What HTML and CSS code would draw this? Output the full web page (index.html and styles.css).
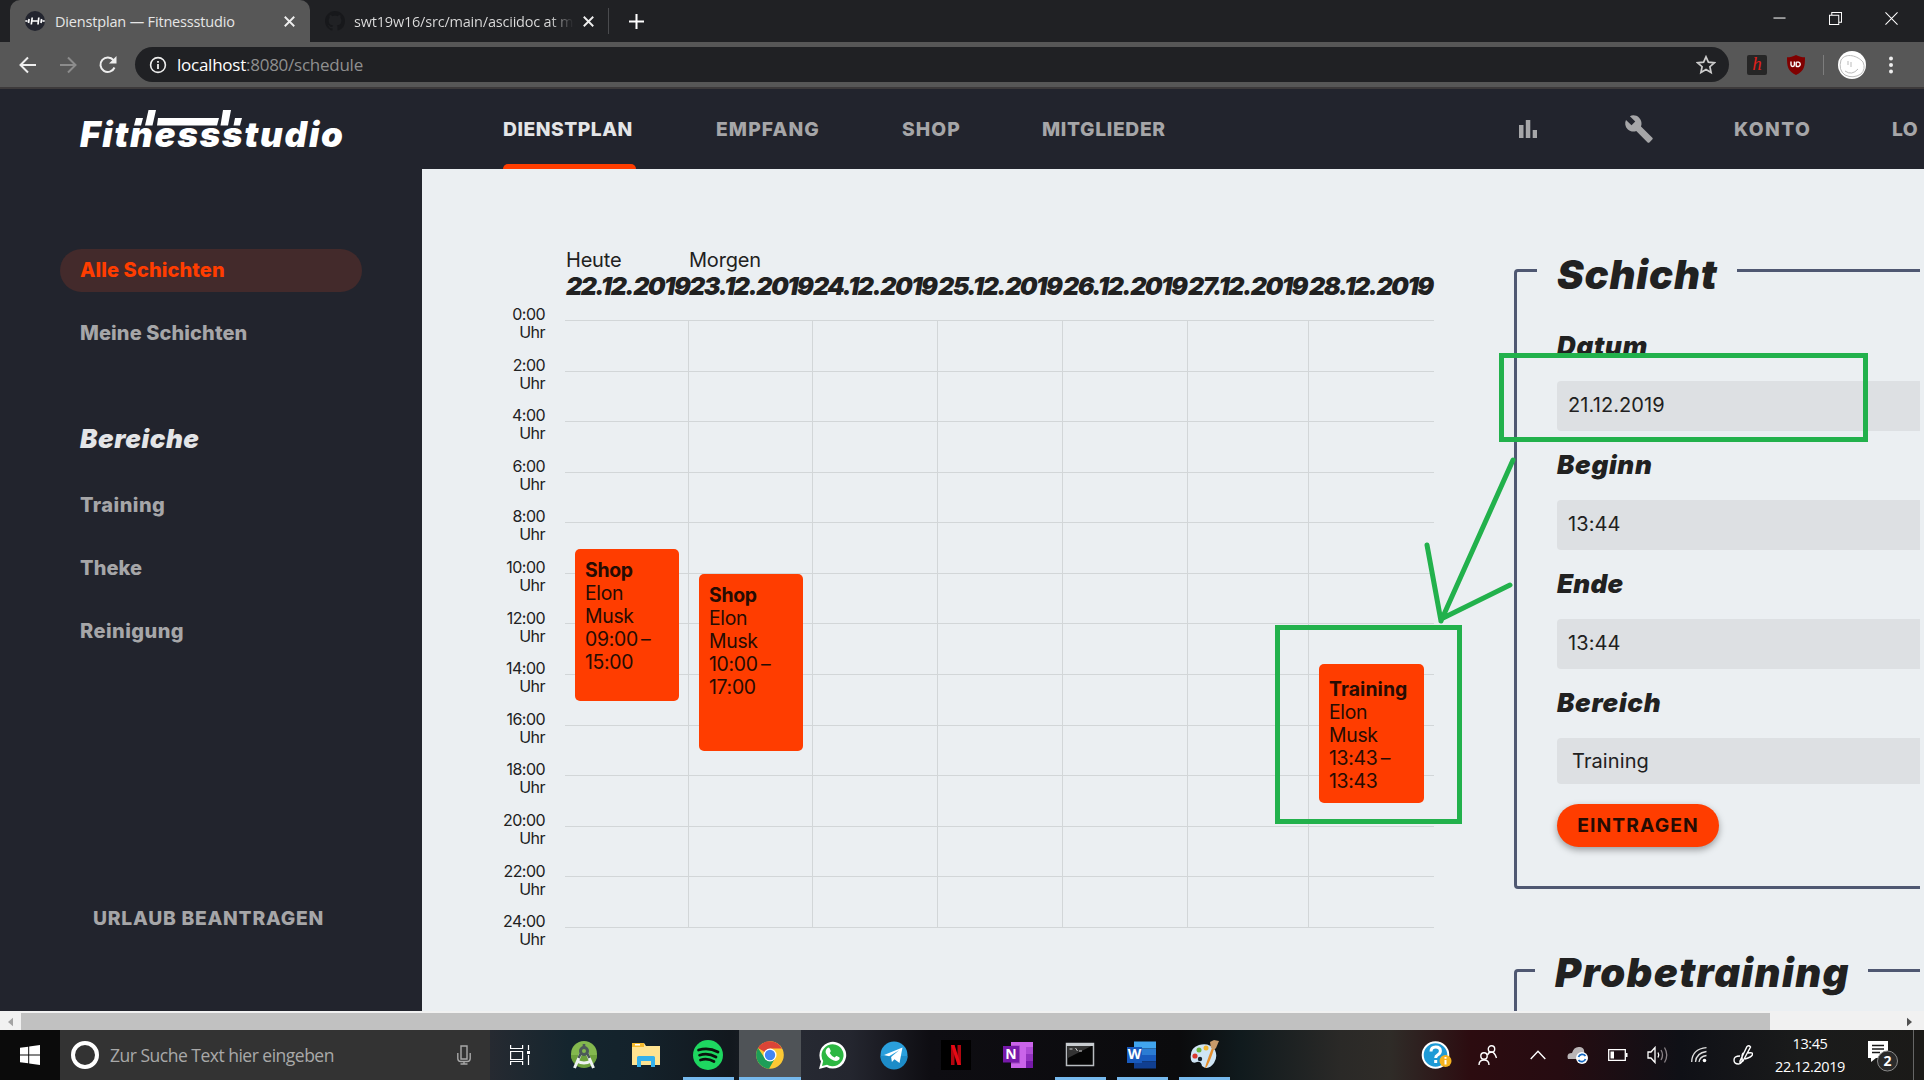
FILE: index.html
```html
<!DOCTYPE html>
<html lang="de">
<head>
<meta charset="utf-8">
<title>Dienstplan — Fitnessstudio</title>
<link rel="stylesheet" href="styles.css">
</head>
<body>
<div class="tabstrip">
  <div class="tab tab-active">
    <svg class="favicon" viewBox="0 0 20 20"><circle cx="10" cy="10" r="10" fill="#23252f"/><path d="M.3 10h2.200M3.500 12l.6-4M6.300 13.500l.9-7M7.500 10h5M13 13.500l.8-7M16 12l.6-4M17.500 10h2.200" stroke="#fff" stroke-width="1.700" fill="none"/></svg>
    <span class="tab-title">Dienstplan — Fitnessstudio</span>
    <svg class="tab-close" viewBox="0 0 10 10"><path d="M.7.7l8.600 8.600M9.300.7L.7 9.300"/></svg>
  </div>
  <div class="tab tab-idle">
    <svg class="favicon" viewBox="0 0 16 16"><path fill="#17181b" d="M8 0C3.580 0 0 3.580 0 8c0 3.540 2.290 6.530 5.470 7.590.4.070.55-.17.55-.38 0-.19-.01-.82-.01-1.490-2.010.37-2.530-.49-2.690-.94-.09-.23-.48-.94-.82-1.130-.28-.15-.68-.52-.01-.53.63-.01 1.080.58 1.230.82.72 1.210 1.870.87 2.330.66.070-.52.28-.87.51-1.070-1.780-.2-3.640-.89-3.640-3.950 0-.87.31-1.590.82-2.150-.08-.2-.36-1.020.08-2.120 0 0 .67-.21 2.200.82.64-.18 1.320-.27 2-.27s1.360.09 2 .27c1.530-1.040 2.200-.82 2.200-.82.44 1.100.16 1.920.08 2.120.51.56.82 1.270.82 2.150 0 3.070-1.870 3.750-3.650 3.950.29.25.54.73.54 1.480 0 1.070-.01 1.930-.01 2.200 0 .21.15.46.55.38A8.010 8.010 0 0016 8c0-4.420-3.580-8-8-8z"/></svg>
    <span class="tab-title tab-title-fade">swt19w16/src/main/asciidoc at m</span>
    <svg class="tab-close" viewBox="0 0 10 10"><path d="M.7.7l8.600 8.600M9.300.7L.7 9.300"/></svg>
  </div>
  <svg class="new-tab" viewBox="0 0 14 14"><path d="M7 0v14M0 7h14"/></svg>
  <div class="window-buttons">
    <svg viewBox="0 0 14 14"><path d="M.5 6.500h13"/></svg>
    <svg viewBox="0 0 14 14"><path d="M.5 3.500h10v10H.5zM3 3V.5h10.500V11H11"/></svg>
    <svg viewBox="0 0 14 14"><path d="M.5.5l13 13M13.500.5l-13 13"/></svg>
  </div>
</div>
<div class="toolbar">
  <svg class="nav-icon" viewBox="0 0 18 18"><path d="M17 9H2M9 1.500L1.500 9 9 16.500"/></svg>
  <svg class="nav-icon dim" viewBox="0 0 18 18"><path d="M1 9h15M9 1.500L16.500 9 9 16.500"/></svg>
  <svg class="nav-icon" viewBox="0 0 18 18"><path d="M15.500 11.500A7.300 7.300 0 1 1 14.500 4.200"/><path d="M17.500 0v7.500H10z" fill="#eee" stroke="none"/></svg>
  <div class="omnibox">
    <svg class="info" viewBox="0 0 18 18"><circle cx="9" cy="9" r="7.400" fill="none" stroke="#eee" stroke-width="1.600"/><path d="M9 8v5M9 5v1.800" stroke="#eee" stroke-width="1.800"/></svg>
    <span class="url"><b>localhost</b>:8080/schedule</span>
    <svg class="star" viewBox="0 0 20 20"><path d="M10 1.800l2.400 5.400 5.900.6-4.400 3.900 1.200 5.800L10 14.500l-5.100 3 1.200-5.800-4.400-3.900 5.900-.6z"/></svg>
  </div>
  <div class="ext-h">h</div>
  <svg class="ublock" viewBox="0 0 18 20"><path d="M9 0c3 1.700 6 2.300 9 2.300 0 8.700-.5 14-9 17.700C.5 16.300 0 11 0 2.300 3 2.300 6 1.700 9 0z" fill="#800000"/><path d="M4 6.500v3.300q0 1.700 1.700 1.700T7.400 9.800V6.500M9.200 7.300v3.400q0 .8.8.8h1.600a2.300 2.300 0 0 0 0-4.400H9.200" fill="none" stroke="#fff" stroke-width="1.400"/></svg>
  <i class="sep"></i>
  <svg class="avatar" viewBox="0 0 28 28"><circle cx="14" cy="14" r="14" fill="#fff"/><path d="M3 9C8 1 20 5 25 11q3 7-2 12-8 5-16 1Q0 19 3 9M10 10v4M13 11v5M7 20q7 5 13-2" fill="none" stroke="#bbb" stroke-width="1"/></svg>
  <svg class="dots" viewBox="0 0 4 18"><circle cx="2" cy="2.500" r="2"/><circle cx="2" cy="9" r="2"/><circle cx="2" cy="15.500" r="2"/></svg>
</div>

<div class="app">
  <header class="app-header">
    <div class="brand">
      <span>Fitnessstudio</span>
      <svg class="barbell" viewBox="0 0 110 18"><path fill="#fff" d="M3 8h7l-2 7.500H1zM15.500 0h7.500l-3.500 15.500H12zM25 8h61l-2 7.500H24zM90 0h8l-3 15.500h-7.500zM102 8h7l-2 7.500h-6.500z"/></svg>
    </div>
    <nav class="main-nav">
      <a class="active">DIENSTPLAN</a><a>EMPFANG</a><a>SHOP</a><a class="tight">MITGLIEDER</a>
    </nav>
    <nav class="user-nav">
      <svg class="stats" viewBox="0 0 18 18"><path d="M0 5h4.500v13H0zM6.800 0h4.500v18H6.800zM13.700 10H18v8h-4.300z"/></svg>
      <svg class="wrench" viewBox="0 0 24 24"><path d="M22.700 19l-9.100-9.100c.9-2.300.4-5-1.500-6.900-2-2-5-2.400-7.400-1.300L9 6 6 9 1.600 4.700C.4 7.100.9 10.100 2.900 12.100c1.900 1.900 4.600 2.400 6.900 1.500l9.100 9.100c.4.4 1 .4 1.400 0l2.300-2.300c.5-.4.5-1.100.1-1.400z"/></svg>
      <a class="konto">KONTO</a><a class="logout">LO</a>
    </nav>
  </header>
  <div class="app-body">
    <aside class="sidebar">
      <a class="side-link current">Alle Schichten</a>
      <a class="side-link">Meine Schichten</a>
      <h2>Bereiche</h2>
      <a class="side-link wide">Training</a>
      <a class="side-link">Theke</a>
      <a class="side-link wide">Reinigung</a>
      <a class="vacation">URLAUB BEANTRAGEN</a>
    </aside>
    <main class="content">
      <section class="calendar">
        <div class="hours">
          <span>0:00<br>Uhr</span><span>2:00<br>Uhr</span><span>4:00<br>Uhr</span><span>6:00<br>Uhr</span><span>8:00<br>Uhr</span><span>10:00<br>Uhr</span><span>12:00<br>Uhr</span><span>14:00<br>Uhr</span><span>16:00<br>Uhr</span><span>18:00<br>Uhr</span><span>20:00<br>Uhr</span><span>22:00<br>Uhr</span><span>24:00<br>Uhr</span>
        </div>
        <div class="plan">
          <div class="day-heads">
            <div>Heute<b>22.12.2019</b></div><div>Morgen<b>23.12.2019</b></div><div><b>24.12.2019</b></div><div><b>25.12.2019</b></div><div><b>26.12.2019</b></div><div><b>27.12.2019</b></div><div><b>28.12.2019</b></div>
          </div>
          <div class="board">
            <div class="rows"><i></i><i></i><i></i><i></i><i></i><i></i><i></i><i></i><i></i><i></i><i></i><i></i><i></i></div>
            <div class="days">
              <div><article class="shift" style="margin-top:229px;height:152px"><b>Shop</b>Elon<br>Musk<br>09:00&thinsp;–<br>15:00</article></div>
              <div><article class="shift" style="margin-top:254px;height:177px"><b>Shop</b>Elon<br>Musk<br>10:00&thinsp;–<br>17:00</article></div>
              <div></div><div></div><div></div><div></div>
              <div><article class="shift short" style="margin-top:344px;height:139px"><b>Training</b>Elon<br>Musk<br>13:43&thinsp;–<br>13:43</article></div>
            </div>
          </div>
        </div>
      </section>
      <section class="forms">
        <fieldset class="shift-form">
          <legend>Schicht</legend>
          <label>Datum</label><div class="field">21.12.2019</div>
          <label>Beginn</label><div class="field">13:44</div>
          <label class="narrow">Ende</label><div class="field">13:44</div>
          <label>Bereich</label><div class="field select">Training</div>
          <button>EINTRAGEN</button>
        </fieldset>
        <fieldset class="trial-form">
          <legend>Probetraining</legend>
        </fieldset>
      </section>
    </main>
  </div>
</div>

<div class="scrollbar">
  <svg viewBox="0 0 6 10"><path d="M6 0v10L0 5z" fill="#a3a3a3"/></svg>
  <i class="thumb"></i>
  <svg class="arrow-right" viewBox="0 0 6 10"><path d="M0 0v10l6-5z" fill="#505050"/></svg>
</div>

<div class="taskbar">
  <div class="start"><svg viewBox="0 0 20 20"><path fill="#fff" d="M0 2.800L8.200 1.700v7.800H0zM9.200 1.500L20 0v9.500H9.200zM0 10.500h8.200v7.800L0 17.200zM9.200 10.500H20V20L9.200 18.500z"/></svg></div>
  <div class="search">
    <i class="cortana"></i><span>Zur Suche Text hier eingeben</span>
    <svg class="mic" viewBox="0 0 14 20"><path d="M4 1h6v13H4zM.8 8v5.500q0 3 3 3h6.400q3 0 3-3V8M7 16.500V19M3.500 19h7" fill="none" stroke="#a8a8a8" stroke-width="1.400"/></svg>
  </div>
  <div class="task view"><svg viewBox="0 0 20 20"><path d="M.6 0v3.500h12V0M.6 6.500h12v8H.6zM.6 20v-3.500h12V20M18.500 0v5M18.500 10v10" fill="none" stroke="#fff" stroke-width="1.200"/><path d="M17 6h3v3h-3z" fill="#fff"/></svg></div>
  <div class="task"><svg viewBox="0 0 30 30"><circle cx="15" cy="14" r="13" fill="#83b84e"/><path d="M2 15a13 13 0 0 0 26 0z" fill="#6ca03c"/><path d="M12 13L5.500 28M18 13l6.500 15M8 21q7 4 14 0" stroke="#eef2f2" stroke-width="3" fill="none"/><circle cx="15" cy="11" r="3.500" fill="none" stroke="#4d5a5a" stroke-width="3"/><path d="M15 4v4M12 13l-2.500 5M18 13l2.500 5" stroke="#4d5a5a" stroke-width="2.600"/></svg></div>
  <div class="task"><svg viewBox="0 0 30 30"><path d="M1 3h12l2 3h14v19H1z" fill="#ffe391"/><path d="M1 3h12v4H1z" fill="#f6bb2f"/><path d="M4 4h5v1.500H4z" fill="#fff"/><path d="M6 27V17.500Q6 16 7.500 16h15q1.500 0 1.500 1.500V27h-4v-6H10v6z" fill="#35b1ec"/></svg></div>
  <div class="task open"><svg viewBox="0 0 30 30"><circle cx="15" cy="15" r="15" fill="#1ed760"/><path d="M5.500 10q10-3.200 19.500 2M6.500 15.200q8.500-2.700 16.500 1.800M7.500 20q7-2.200 13.500 1.500" stroke="#0b120d" stroke-width="2.700" stroke-linecap="round" fill="none"/></svg></div>
  <div class="task open current-app"><svg viewBox="0 0 30 30"><circle cx="15" cy="15" r="13.800" fill="#fcc934"/><path d="M15 15L3 8.100a13.800 13.800 0 0 1 24 .5H15z" fill="#db4437"/><path d="M3 8.100A13.800 13.800 0 0 0 14 28.800l6-10.500-5-3.300-5 3.500z" fill="#1e9e58"/><circle cx="15" cy="15" r="6.500" fill="#fff"/><circle cx="15" cy="15" r="5.200" fill="#4285f4"/></svg></div>
  <div class="task"><svg viewBox="0 0 30 30"><path d="M2 29l2-7.500A13.400 13.400 0 1 1 9.500 27z" fill="#fff"/><path d="M5 26l1.200-5A11 11 0 1 1 10 24.700z" fill="#2cb742"/><path d="M10.500 8q1.500-1 2.200.5l1 2.300q.3.800-1 2.200 1.800 3.200 5 4.500 1.200-1.800 2-1.500l2.500 1.300q1 .5 0 2.200-2.200 2.500-6 .8-5-2.300-7.200-6.800-1.300-3 1.500-5.500z" fill="#fff"/></svg></div>
  <div class="task"><svg viewBox="0 0 30 30"><circle cx="15" cy="15" r="13.500" fill="#2a9fdc"/><path d="M1.500 16a13.500 13.500 0 0 0 27 0z" fill="#1d8cc8"/><path d="M5 15L23.500 7.500 20.500 23l-5-3.700-2.600 2.600-.8-5 8-6.700-10 6z" fill="#fff"/></svg></div>
  <div class="task"><svg viewBox="0 0 30 30"><path d="M0 0h30v30H0z" fill="#000"/><path d="M10 5h3.500v20H10zM16.500 5H20v20h-3.500z" fill="#b1060f"/><path d="M10 5h3.500L20 25h-3.500z" fill="#e50914"/></svg></div>
  <div class="task"><svg viewBox="0 0 30 30"><path d="M8 2h22v26H8z" fill="#ca64ea"/><path d="M23 7h7v7h-7z" fill="#ae4bd5"/><path d="M23 14h7v7h-7z" fill="#9332bf"/><path d="M23 21h7v7h-7z" fill="#7719aa"/><path d="M8 5.500h9v18H8z" fill="#6f2c91" opacity=".5"/><path d="M0 6h16v16.500H0z" fill="#7719aa"/><text x="8" y="19" class="app-letter">N</text></svg></div>
  <div class="task open"><svg viewBox="0 0 30 30"><path d="M1.500 3.500h27v22h-27z" fill="#050505" stroke="#b8bcc0" stroke-width="1.500"/><path d="M1 3h28v3H1z" fill="#c8ccd0"/><path d="M2.500 6h24L3 18z" fill="#333"/><path d="M4.500 9h3M9 8.500v.1M9 10.500v.1M10.500 8l2 3M14 11h3" stroke="#ccc"/></svg></div>
  <div class="task open"><svg viewBox="0 0 30 30"><path d="M7 1.500h22v7H7z" fill="#41a5ee"/><path d="M7 8.500h22v6.500H7z" fill="#2b7cd3"/><path d="M7 15h22v6.500H7z" fill="#185abd"/><path d="M7 21.500h22v7H7z" fill="#103f91"/><path d="M0 7h15v16H0z" fill="#185abd"/><text x="7.500" y="19" class="app-letter">W</text></svg></div>
  <div class="task open"><svg viewBox="0 0 30 30"><path d="M2 20Q0 8 10 5q10-3 16 5 3 7-1 13-6 8-12 3-1-5-5-4-5 2-6-2z" fill="#cfe5f5"/><circle cx="6" cy="16" r="2.600" fill="#d9382e"/><circle cx="10" cy="10" r="2.500" fill="#6cb33f"/><circle cx="17" cy="8" r="2.500" fill="#f2b632"/><circle cx="11" cy="19" r="2.200" fill="#17202a"/><path d="M16 28q1-5 7-20l2 1q-4 13-8 19z" fill="#e58e2c"/><path d="M22 8l-1-6 4-2 5 1-3 7-2 2z" fill="#c79a6a"/></svg></div>
  <div class="tray">
    <svg class="t-help" viewBox="0 0 30 30"><circle cx="14" cy="15" r="12.800" fill="#1e9ad6" stroke="#fff" stroke-width="2"/><path d="M9.500 11.500q0-4.500 4.700-4.500t4.700 4q0 2.500-2.800 4-1.900 1-1.900 3M14.200 20v3" stroke="#fff" stroke-width="3" fill="none"/><circle cx="24" cy="21" r="6" fill="#f5b21e"/><path d="M24 20v4.500M24 17v1.800" stroke="#fff" stroke-width="2"/></svg>
    <svg class="t-people" viewBox="0 0 20 20"><g fill="none" stroke="#fff" stroke-width="1.400"><circle cx="13.500" cy="4" r="3.200"/><circle cx="6" cy="11" r="3.200"/><path d="M1 20q0-5 5-5t5 5M9.500 10q1-3 4-3t5 6"/></g></svg>
    <svg class="t-up" viewBox="0 0 16 10"><path d="M.7 9L8 1.200 15.300 9" fill="none" stroke="#fff" stroke-width="1.400"/></svg>
    <svg class="t-cloud" viewBox="0 0 22 18"><path d="M1 13q-2-6 4-6 2-7 8-6 5 1 4 6l-4 6z" fill="#b9b4b6"/><circle cx="15" cy="12" r="6" fill="#fff"/><path d="M11.500 11a4 4 0 0 1 7-1M18.500 13a4 4 0 0 1-7 1" stroke="#1466c0" stroke-width="1.800" fill="none"/></svg>
    <svg class="t-batt" viewBox="0 0 20 12"><path d="M.7.7h16.600v10.600H.7z" fill="none" stroke="#fff" stroke-width="1.300"/><path d="M2.500 2.500H6v7H2.500zM18 4h1.500v4H18z" fill="#fff"/></svg>
    <svg class="t-vol" viewBox="0 0 22 18"><path d="M1 6h3l4-4.500v15L4 12H1z" fill="none" stroke="#fff" stroke-width="1.300"/><path d="M11 6.500q1.500 2.500 0 5" stroke="#fff" stroke-width="1.300" fill="none"/><path d="M14 4q3 5 0 10M17.500 1.500q4.500 7.500 0 15" stroke="#8b8488" stroke-width="1.300" fill="none"/></svg>
    <svg class="t-wifi" viewBox="0 0 16 16"><g fill="none" stroke="#ddd" stroke-width="1.300"><path d="M.7 15Q1 2 15.500.7M4.500 15Q5 6 15.500 4.500M8 15q.5-5.500 7.500-6.500"/></g><circle cx="13.500" cy="13.500" r="1.800" fill="#fff"/></svg>
    <svg class="t-pen" viewBox="0 0 20 20"><g fill="none" stroke="#fff" stroke-width="1.400"><path d="M7 16L14 1.500q2-1.500 3.500.5L10 16l-3 2zM7 11q-6 0-6 4t4.500 4T9 12q0-4 2-4M15 8q5-1 4.500 1.500T12 14"/></g></svg>
    <div class="clock"><span>13:45</span><span>22.12.2019</span></div>
    <svg class="t-note" viewBox="0 0 32 32"><path d="M1 1h20v17H9l-5 4v-4H1z" fill="#fff"/><path d="M5 5.500h12M5 9h12M5 12.500h8" stroke="#1a1a1a" stroke-width="1.300"/><circle cx="20.500" cy="21" r="10" fill="#2b2b2b" stroke="#8a8a8a"/><text x="20.500" y="26" class="badge-number">2</text></svg>
    <i class="peek"></i>
  </div>
</div>

<svg class="markup" viewBox="0 0 1924 1080"><g fill="none" stroke="#22b14c" stroke-width="5"><path d="M1501.500 355.500h364v84h-364zM1277.500 627.500h182v194h-182z"/><path stroke-linecap="round" d="M1513 460L1441 621M1427 545l14 76M1510 585l-69 34"/></g></svg>
</body>
</html>
```
FILE: styles.css
```css
* { box-sizing: border-box; }
body {
  margin: 0; width: 1924px; height: 1080px; overflow: hidden;
  display: flex; flex-direction: column;
  font-family: Inter, "Liberation Sans", sans-serif; font-size: 20px; color: #212121;
  background: #22242d;
}
svg { display: block; flex: none; }

/* Browser tabs */
.tabstrip { display: flex; height: 42px; background: #202124; flex: none; align-items: center; }
.tab { display: flex; align-items: center; height: 42px; font: 14.5px "Open Sans", sans-serif; letter-spacing: -.17px; color: #e6e6e6; }
.tab-active { width: 300px; margin-left: 10px; padding-left: 15px; background: #575757; border-radius: 10px 10px 0 0; }
.tab-idle { width: 299px; padding-left: 15px; height: 26px; border-right: 1px solid #4a4b4e; }
.favicon { width: 20px; height: 20px; }
.tab-title { width: 220px; margin-left: 10px; white-space: nowrap; overflow: hidden; }
.tab-active .tab-title { width: 229px; }
.tab-title-fade { margin-left: 9px; width: 222px; letter-spacing: -.2px; color: transparent; background: linear-gradient(90deg, #dfdfdf 195px, #2c2d30 218px); background-clip: text; -webkit-background-clip: text; }
.tab-close { width: 11px; height: 11px; stroke: #eee; stroke-width: 1.7; fill: none; }
.tab-idle .tab-close { margin-left: 7px; }
.new-tab { width: 15px; height: 15px; margin-left: 20px; stroke: #fff; stroke-width: 1.9; }
.window-buttons { display: flex; gap: 43px; margin: -6px 26px 0 auto; }
.window-buttons svg { width: 13px; height: 13px; fill: none; stroke: #fff; stroke-width: 1.1; }
.toolbar { display: flex; align-items: center; height: 47px; background: #575757; border-bottom: 2px solid #3d3a3b; flex: none; padding: 0 28px 0 19px; }
.nav-icon { width: 18px; height: 18px; margin-right: 22px; fill: none; stroke: #eee; stroke-width: 2; }
.dim { stroke: #8c8c8c; }
.omnibox { display: flex; align-items: center; width: 1594px; height: 35px; margin-left: -4px; border-radius: 18px; background: #202124; padding: 0 13px 0 14px; }
.info { width: 18px; height: 18px; }
.url { margin-left: 10px; font: 17px "Open Sans", sans-serif; letter-spacing: -.25px; color: #8f8f8f; }
.url b { font-weight: 400; color: #fff; }
.star { width: 20px; height: 20px; margin-left: auto; fill: none; stroke: #ccc; stroke-width: 1.7; }
.ext-h { width: 20px; height: 20px; margin-left: 18px; background: #262626; border-radius: 2px; font: italic 19px/18px "Liberation Serif", serif; color: #e0201b; text-align: center; }
.ublock { width: 18px; height: 20px; margin-left: 20px; }
.sep { width: 1px; height: 20px; margin: 0 14px 0 18px; background: #7d7d7d; }
.avatar { width: 28px; height: 28px; }
.dots { width: 4px; height: 18px; margin-left: 23px; fill: #eee; }

/* Application */
.app { height: 922px; flex: none; overflow: hidden; }
.app-header { display: flex; align-items: center; height: 80px; background: #22242d; color: #a6a6a8; font-weight: 800; font-size: 19.3px; letter-spacing: 1.2px; }
.brand { position: relative; width: 422px; padding: 9px 0 0 80px; font: italic 900 35px/44px Inter, sans-serif; letter-spacing: 1.76px; color: #fff; }
.barbell { position: absolute; left: 133px; top: 7px; width: 110px; height: 18px; }
.main-nav { display: flex; align-items: stretch; height: 80px; margin-left: 81px; line-height: 80px; }
.main-nav a { width: 106px; margin-right: 80px; letter-spacing: 1.1px; }
.main-nav a:nth-child(3) { width: 60px; }
.main-nav .active { width: 133px; letter-spacing: .5px; color: #e4e5e7; display: flex; flex-direction: column; }
.main-nav .active::after { content: ""; height: 5px; margin-top: -5px; background: #ff3d00; border-radius: 5px 5px 0 0; }
.main-nav .tight { width: 127px; letter-spacing: .65px; }
.user-nav { display: flex; align-items: center; margin-left: 270px; }
.stats { width: 18px; height: 18px; margin-right: 87px; fill: #a6a6a8; }
.wrench { width: 30px; height: 30px; margin-right: 80px; fill: #a6a6a8; }
.konto { width: 158px; letter-spacing: 1.4px; }
.logout { letter-spacing: .4px; }
.app-body { display: flex; height: 842px; }
.sidebar { display: flex; flex-direction: column; width: 422px; padding: 80px 60px 0; background: #22242d; color: #a6a6a8; font-weight: 800; flex: none; }
.side-link { height: 43px; line-height: 43px; padding-left: 20px; margin-bottom: 20px; border-radius: 22px; letter-spacing: .1px; }
.wide { letter-spacing: .45px; }
.current { background: #432a2b; color: #ff3d00; }
.sidebar h2 { margin: 42px 0 24px; padding-left: 20px; font: italic 900 26px/43px Inter, sans-serif; letter-spacing: .57px; color: #e4e5e7; }
.vacation { margin: 224px 0 0 33px; font-size: 19.3px; line-height: 43px; letter-spacing: .75px; white-space: nowrap; }
.content { display: flex; width: 1502px; background: #ebeff2; padding-top: 77px; }

/* Week calendar */
.calendar { display: flex; width: 1012px; padding-top: 2px; flex: none; }
.hours { width: 143px; padding: 57px 20px 0 0; flex: none; font-size: 16px; line-height: 18px; letter-spacing: -.55px; text-align: right; }
.hours span { display: block; height: 50.6px; }
.day-heads, .days { display: grid; grid-template-columns: 123px 124px 125px 125px 125px 121px 126px; }
.day-heads { height: 72px; align-items: end; padding-bottom: 20px; line-height: 24px; letter-spacing: -.2px; text-indent: 1px; }
.day-heads b { display: block; font: italic 900 25px/28px Inter, sans-serif; letter-spacing: -1.5px; white-space: nowrap; }
.board { display: grid; width: 869px; height: 608px; }
.rows, .days { grid-area: 1 / 1; }
.rows { display: flex; flex-direction: column; justify-content: space-between; }
.rows i { height: 1px; background: #d2d6d8; }
.days > div { border-left: 1px solid #d2d6d8; }
.days > div:first-child { border-color: transparent; }
.shift { width: 104px; margin-left: 9px; padding: 10px 0 0 10px; border-radius: 5px; background: #ff3d00; color: #260c03; font-size: 19.4px; line-height: 23px; letter-spacing: -.3px; }
.shift b { display: block; }
.days > div:nth-child(2) .shift { margin-left: 10px; }
.short { padding-top: 14px; margin-left: 10px; width: 105px; }
.short b { letter-spacing: .1px; }

/* Entry forms */
.forms { width: 486px; margin-left: 80px; overflow: hidden; margin-right: 4px; }
fieldset { width: 520px; min-width: 0; margin: 0; border: 3px solid #4f5872; border-radius: 4px; padding: 0 0 39px 20px; }
legend { width: 200px; padding: 10px 0 0 20px; font: italic 900 40px/38px Inter, sans-serif; letter-spacing: .85px; }
.shift-form label { display: block; margin: 19px 0 20px 20px; font: italic 900 26px/30px Inter, sans-serif; letter-spacing: .7px; }
.shift-form legend + label { margin-top: 37px; margin-bottom: 19.5px; }
.shift-form .narrow { letter-spacing: .2px; }
.field { height: 50px; margin-left: 20px; padding-left: 11px; border-radius: 4px; background: #dde0e3; line-height: 49px; letter-spacing: .1px; }
.select { height: 46px; line-height: 47px; padding-left: 15px; }
button { display: block; width: 162px; height: 43px; margin: 20px 0 0 20px; padding: 0; border: 0; border-radius: 22px; background: #ff3d00; color: #260c03; font: 700 19.3px Inter, sans-serif; letter-spacing: 1.1px; box-shadow: 0 3px 7px rgba(0, 0, 0, .35); }
.trial-form { margin-top: 58px; height: 140px; padding-left: 18px; }
.trial-form legend { width: 333px; padding-top: 3px; line-height: 45px; letter-spacing: 1.4px; }

.scrollbar { display: flex; align-items: center; height: 19px; padding: 2px 12px 0 8px; background: #f1f1f1; flex: none; }
.scrollbar svg { width: 5px; height: 10px; }
.thumb { width: 1749px; height: 17px; margin-left: 8px; background: #c1c1c1; }
.arrow-right { margin-left: auto; }

/* Desktop taskbar */
.taskbar { display: flex; height: 50px; flex: none; background: linear-gradient(90deg, #0b0b0b 60px, #262a31 490px, #14252e 570px, #14222b 640px, #12181e 730px, #262932 800px, #24262f 850px, #0e0d12 930px, #0b0b0d 1180px, #101a1d 1240px, #2a2927 1340px, #2f2c28 1390px, #2c0c10 1470px, #260c11 1560px, #0f1016 1680px, #1a1b1b 1800px, #1b1a18); }
.start { width: 60px; padding: 15px 20px; }
.start svg { width: 20px; height: 20px; }
.search { display: flex; align-items: center; width: 430px; padding: 0 19px 0 11px; background: #333; color: #a9a9a9; font: 17.5px "Open Sans", sans-serif; letter-spacing: -.5px; }
.cortana { width: 28px; height: 28px; border: 4px solid #fff; border-radius: 50%; margin-right: 11px; }
.mic { width: 14px; height: 20px; margin-left: auto; }
.task { display: flex; justify-content: center; align-items: center; width: 62px; padding: 0 5px; }
.view { width: 63px; padding: 0; }
.task svg { width: 30px; height: 30px; }
.view svg { width: 20px; height: 20px; margin: -1px 3px 0 0; }
.open { background: linear-gradient(#76b9ed, #76b9ed) center bottom / 51px 3px no-repeat; }
.current-app { background: linear-gradient(#76b9ed, #76b9ed) bottom / 100% 3px no-repeat, #4f5357; }
.app-letter { font: 700 14px "Open Sans", sans-serif; fill: #fff; text-anchor: middle; }
.badge-number { font: 700 14px "Open Sans", sans-serif; fill: #fff; text-anchor: middle; }
.tray { display: flex; align-items: center; margin-left: 186px; }
.t-help { width: 31px; height: 30px; }
.t-people { width: 20px; height: 20px; margin-left: 26px; }
.t-up { width: 16px; height: 10px; margin-left: 32px; }
.t-cloud { width: 22px; height: 18px; margin-left: 21px; }
.t-batt { width: 20px; height: 12px; margin-left: 19px; }
.t-vol { width: 22px; height: 18px; margin-left: 19px; }
.t-wifi { width: 16px; height: 16px; margin-left: 22px; }
.t-pen { width: 20px; height: 20px; margin-left: 26px; }
.clock { display: flex; flex-direction: column; align-items: center; width: 74px; margin-left: 20px; font: 14.5px/23px "Open Sans", sans-serif; letter-spacing: -.4px; color: #fff; }
.t-note { width: 32px; height: 32px; margin: 0 0 -1px 20px; }
.peek { width: 1px; height: 50px; margin-left: 14px; background: #666; }

/* Pen markings drawn over the window */
.markup { position: absolute; left: 0; top: 0; width: 1924px; height: 1080px; pointer-events: none; }
```
